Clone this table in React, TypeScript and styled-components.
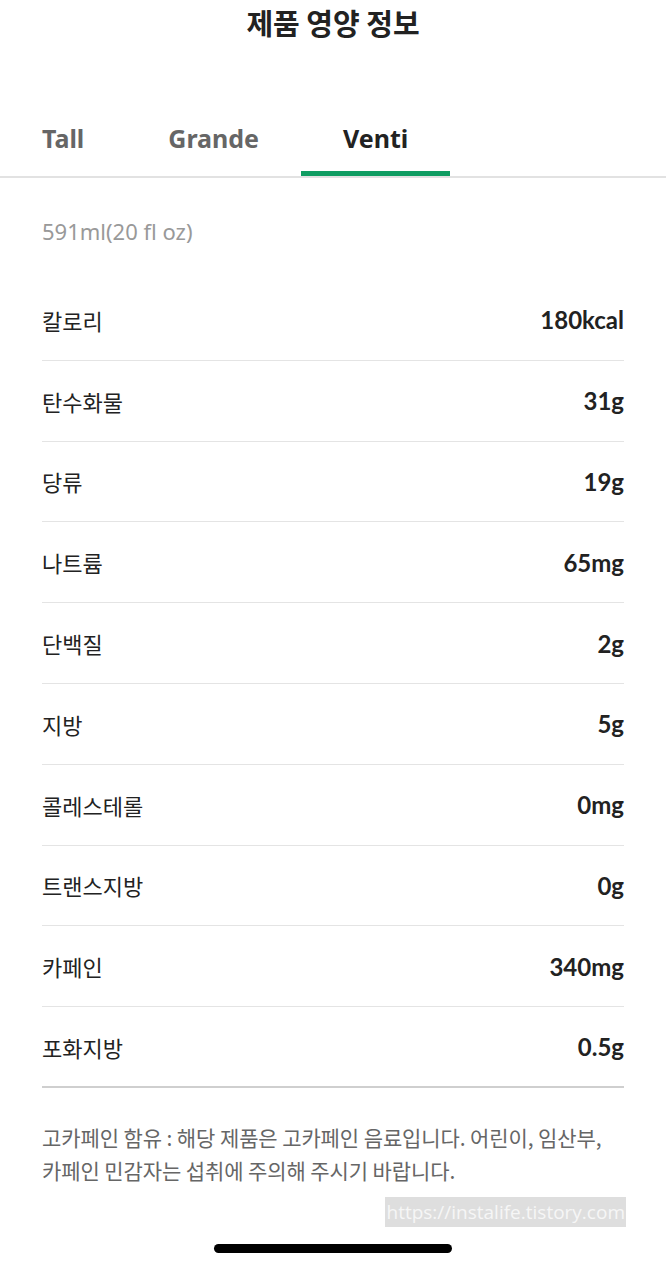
import React from "react";
import styled, { createGlobalStyle } from "styled-components";

const GlobalStyle = createGlobalStyle`
  * { box-sizing: border-box; }
  body {
    margin: 0;
    background: #fff;
    font-family: "Noto Sans CJK KR", "Noto Sans", sans-serif;
    color: #222;
  }
`;

const Page = styled.div`
  width: 666px;
  height: 1268px;
  display: flex;
  flex-direction: column;
  overflow: hidden;
`;

const Title = styled.h1`
  margin: 0;
  height: 44px;
  display: flex;
  align-items: center;
  justify-content: center;
  font-size: 29px;
  font-weight: 700;
  color: #222;
`;

const TabBar = styled.div`
  display: flex;
  margin-top: 68px;
  border-bottom: 2px solid #e2e2e2;
`;

const Tab = styled.div<{ $active?: boolean }>`
  padding: 0 42px 8px;
  height: 64px;
  display: flex;
  align-items: center;
  font-family: "Noto Sans", sans-serif;
  font-size: 25px;
  font-weight: 700;
  color: ${({ $active }) => ($active ? "#222" : "#666")};
  border-bottom: 5px solid ${({ $active }) => ($active ? "#0f9d62" : "transparent")};
`;

const Content = styled.div`
  padding: 0 42px;
  display: flex;
  flex-direction: column;
`;

const Size = styled.div`
  height: 102px;
  padding-top: 4px;
  display: flex;
  align-items: center;
  font-size: 22px;
  color: #999;
  font-family: "Noto Sans", sans-serif;
`;

const List = styled.div`
  border-bottom: 2px solid #cfcfcf;
`;

const Row = styled.div`
  height: 80.8px;
  display: flex;
  align-items: center;
  justify-content: space-between;
  border-bottom: 1px solid #e4e4e4;

  &:last-child {
    height: 79px;
    border-bottom: none;
  }
`;

const Label = styled.span`
  font-size: 22px;
  color: #222;
`;

const Value = styled.span`
  font-family: "Lato", sans-serif;
  font-size: 24px;
  font-weight: 700;
  color: #222;
`;

const Notice = styled.p`
  margin: 33px 0 0;
  font-size: 21px;
  line-height: 33px;
  color: #666;
  letter-spacing: -0.1px;
`;

const Watermark = styled.div`
  align-self: flex-end;
  margin-top: 10px;
  margin-right: -2px;
  background: #dedede;
  color: #f6f6f6;
  font-family: "Open Sans", sans-serif;
  font-size: 19px;
  height: 30px;
  padding: 0 1px;
  display: flex;
  align-items: center;
`;

const HomeBar = styled.div`
  width: 238px;
  height: 9px;
  border-radius: 5px;
  background: #000;
  margin: 17px auto 0;
`;

const rows: [string, string][] = [
  ["칼로리", "180kcal"],
  ["탄수화물", "31g"],
  ["당류", "19g"],
  ["나트륨", "65mg"],
  ["단백질", "2g"],
  ["지방", "5g"],
  ["콜레스테롤", "0mg"],
  ["트랜스지방", "0g"],
  ["카페인", "340mg"],
  ["포화지방", "0.5g"],
];

export default function App() {
  return (
    <Page>
      <GlobalStyle />
      <Title>제품 영양 정보</Title>
      <TabBar>
        <Tab>Tall</Tab>
        <Tab>Grande</Tab>
        <Tab $active>Venti</Tab>
      </TabBar>
      <Content>
        <Size>591ml(20 fl oz)</Size>
        <List>
          {rows.map(([label, value]) => (
            <Row key={label}>
              <Label>{label}</Label>
              <Value>{value}</Value>
            </Row>
          ))}
        </List>
        <Notice>
          고카페인 함유 : 해당 제품은 고카페인 음료입니다. 어린이, 임산부,
          <br />
          카페인 민감자는 섭취에 주의해 주시기 바랍니다.
        </Notice>
        <Watermark>https://instalife.tistory.com</Watermark>
      </Content>
      <HomeBar />
    </Page>
  );
}
